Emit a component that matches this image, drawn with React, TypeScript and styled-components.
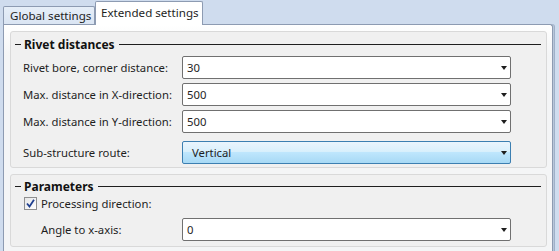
import React from 'react';
import styled, { createGlobalStyle } from 'styled-components';

const GlobalStyle = createGlobalStyle`
  body {
    margin: 0;
    background: #cfdcee;
    font-family: "Segoe UI", "Noto Sans", "Liberation Sans", sans-serif;
    font-size: 11.3px;
    color: #1e1e1e;
  }
`;

const Page = styled.div`
  width: 559px;
  height: 251px;
  box-sizing: border-box;
  padding: 1px 0 0 3px;
  background: #cfdcee;
  overflow: hidden;
  display: flex;
  flex-direction: column;
`;

const TabStrip = styled.div`
  display: flex;
  align-items: flex-end;
  height: 23px;
`;

const Tab = styled.div<{ $active?: boolean }>`
  box-sizing: border-box;
  height: ${(p) => (p.$active ? '24px' : '18px')};
  width: ${(p) => (p.$active ? '108px' : '92px')};
  margin-bottom: ${(p) => (p.$active ? '-1px' : '0')};
  border: 1px solid #8d9bb2;
  border-bottom: none;
  border-radius: 2px 2px 0 0;
  background: ${(p) =>
    p.$active ? '#ffffff' : 'linear-gradient(#e6eef8, #dae5f3)'};
  position: relative;
  z-index: ${(p) => (p.$active ? 2 : 1)};
  display: flex;
  align-items: center;
  white-space: nowrap;
  padding-left: ${(p) => (p.$active ? '5px' : '6px')};
  padding-bottom: ${(p) => (p.$active ? '2px' : '0')};
  color: #1e1e1e;
  font-size: 11.6px;
`;

const Panel = styled.div`
  width: 550px;
  flex: 1;
  box-sizing: border-box;
  border: 1px solid #8d9bb2;
  border-bottom: none;
  border-radius: 0 3px 0 0;
  background: linear-gradient(#ffffff, #f4f5f6 30px, #f4f5f6);
  box-shadow: 1px 0 0 #b9c7da, 2px 0 0 #9fb0c8;
  padding: 6px 0 0 6px;
  display: flex;
  flex-direction: column;
  gap: 6px;
`;

const Group = styled.div<{ $height: number }>`
  box-sizing: border-box;
  width: 537px;
  height: ${(p) => p.$height}px;
  border: 1px solid #d9d9d9;
  border-radius: 3px;
  background: #f0f0f0;
  display: flex;
  flex-direction: column;
`;

const GroupHeader = styled.div<{ $height: number }>`
  height: ${(p) => p.$height}px;
  display: flex;
  align-items: center;
  padding: 0 5px 0 4px;
  flex-shrink: 0;
`;

const Dash = styled.div`
  width: 6px;
  height: 1px;
  background: #1e1e1e;
  margin-right: 3px;
`;

const GroupTitle = styled.span`
  font-weight: bold;
  font-size: 12px;
  color: #111;
`;

const Rule = styled.div`
  flex: 1;
  height: 1px;
  background: #1e1e1e;
  margin-left: 4px;
`;

const Row = styled.div<{ $gap?: number; $indent?: number }>`
  display: flex;
  align-items: center;
  margin-top: ${(p) => p.$gap ?? 0}px;
  padding-left: ${(p) => p.$indent ?? 12}px;
`;

const Label = styled.div<{ $width: number }>`
  width: ${(p) => p.$width}px;
  flex-shrink: 0;
  white-space: nowrap;
`;

const Combo = styled.div<{ $blue?: boolean }>`
  box-sizing: border-box;
  width: 329px;
  height: 23px;
  border: 1px solid ${(p) => (p.$blue ? '#3c7fb1' : '#707070')};
  border-radius: 2px;
  background: ${(p) =>
    p.$blue ? 'linear-gradient(#eaf5fd 0%, #d9f0fc 45%, #bee6fd 50%, #a7d9f5 100%)' : '#ffffff'};
  display: flex;
  align-items: center;
  padding: 0 3px 0 ${(p) => (p.$blue ? '9px' : '4px')};
  color: #1e1e1e;
`;

const ComboText = styled.span`
  flex: 1;
`;

const Arrow = styled.div`
  width: 0;
  height: 0;
  border-left: 3.5px solid transparent;
  border-right: 3.5px solid transparent;
  border-top: 4px solid #1e1e1e;
`;

const CheckRow = styled.div`
  display: flex;
  align-items: center;
  padding-left: 13px;
  height: 13px;
`;

const Check = styled.div`
  box-sizing: border-box;
  width: 13px;
  height: 13px;
  border: 1px solid #8f8f8f;
  background: linear-gradient(135deg, #e6e6e6, #ffffff);
  display: flex;
  align-items: center;
  justify-content: center;
  margin-right: 4px;
`;

const ComboBox = ({ value, blue }: { value: string; blue?: boolean }) => (
  <Combo $blue={blue}>
    <ComboText>{value}</ComboText>
    <Arrow />
  </Combo>
);

const App = () => {
  return (
    <Page>
      <GlobalStyle />
      <TabStrip>
        <Tab>Global settings</Tab>
        <Tab $active>Extended settings</Tab>
      </TabStrip>
      <Panel>
        <Group $height={137}>
          <GroupHeader $height={24}>
            <Dash />
            <GroupTitle>Rivet distances</GroupTitle>
            <Rule />
          </GroupHeader>
          <Row>
            <Label $width={159}>Rivet bore, corner distance:</Label>
            <ComboBox value="30" />
          </Row>
          <Row $gap={4}>
            <Label $width={159}>Max. distance in X-direction:</Label>
            <ComboBox value="500" />
          </Row>
          <Row $gap={4}>
            <Label $width={159}>Max. distance in Y-direction:</Label>
            <ComboBox value="500" />
          </Row>
          <Row $gap={8}>
            <Label $width={159}>Sub-structure route:</Label>
            <ComboBox value="Vertical" blue />
          </Row>
        </Group>
        <Group $height={73}>
          <GroupHeader $height={22}>
            <Dash />
            <GroupTitle>Parameters</GroupTitle>
            <Rule />
          </GroupHeader>
          <CheckRow>
            <Check>
              <svg width="9" height="9" viewBox="0 0 9 9">
                <path d="M1 4.5 L3.5 7.5 L8 0.8" fill="none" stroke="#1f3f8f" strokeWidth="1.8" />
              </svg>
            </Check>
            Processing direction:
          </CheckRow>
          <Row $gap={8} $indent={30}>
            <Label $width={141}>Angle to x-axis:</Label>
            <ComboBox value="0" />
          </Row>
        </Group>
      </Panel>
    </Page>
  );
};

export default App;
